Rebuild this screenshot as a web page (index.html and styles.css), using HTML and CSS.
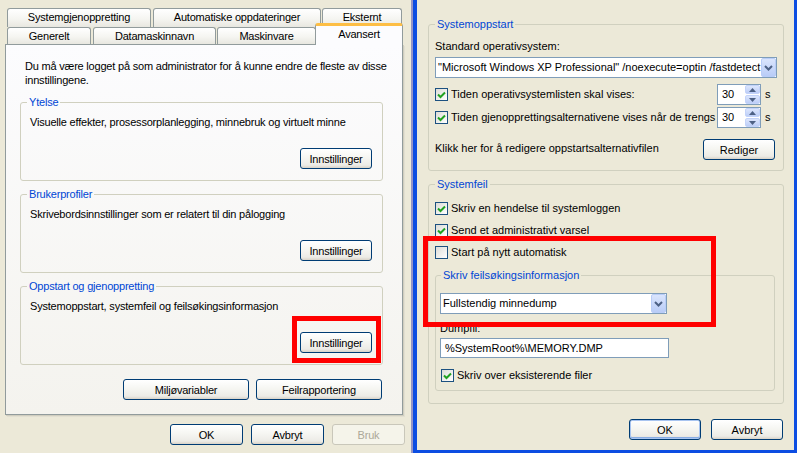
FILE: index.html
```html
<!DOCTYPE html>
<html lang="no">
<head>
  <meta charset="UTF-8" />
  <meta name="viewport" content="width=device-width, initial-scale=1.0" />
  <title>Systemegenskaper - Avansert</title>
  <link rel="stylesheet" href="styles.css">
</head>
<body>
  <div class="screen">
    <div class="dialog left">
      <div class="tabs">
        <div class="tab-row back">
          <div class="tab t-restore">Systemgjenoppretting</div>
          <div class="tab t-update">Automatiske oppdateringer</div>
          <div class="tab t-remote">Eksternt</div>
        </div>
        <div class="tab-row front">
          <div class="tab t-general">Generelt</div>
          <div class="tab t-name">Datamaskinnavn</div>
          <div class="tab t-hardware">Maskinvare</div>
          <div class="tab active">Avansert</div>
        </div>
      </div>

      <div class="page">
        <p class="intro">Du må være logget på som administrator for å kunne endre de fleste av disse<br>innstillingene.</p>

        <fieldset class="group perf">
          <legend>Ytelse</legend>
          <div class="group-text">Visuelle effekter, prosessorplanlegging, minnebruk og virtuelt minne</div>
          <button class="btn settings">Innstillinger</button>
        </fieldset>

        <fieldset class="group perf">
          <legend>Brukerprofiler</legend>
          <div class="group-text">Skrivebordsinnstillinger som er relatert til din pålogging</div>
          <button class="btn settings">Innstillinger</button>
        </fieldset>

        <fieldset class="group perf">
          <legend>Oppstart og gjenoppretting</legend>
          <div class="group-text">Systemoppstart, systemfeil og feilsøkingsinformasjon</div>
          <button class="btn settings">Innstillinger</button>
        </fieldset>

        <div class="page-buttons">
          <button class="btn wide">Miljøvariabler</button>
          <button class="btn wide">Feilrapportering</button>
        </div>
      </div>

      <div class="dialog-buttons">
        <button class="btn">OK</button>
        <button class="btn">Avbryt</button>
        <button class="btn" disabled>Bruk</button>
      </div>
    </div>

    <div class="frame-inactive"></div>

    <div class="dialog right">
      <fieldset class="group boot">
        <legend>Systemoppstart</legend>
        <div class="field-label">Standard operativsystem:</div>
        <div class="combo os">
          <span class="combo-text">"Microsoft Windows XP Professional" /noexecute=optin /fastdetect</span>
          <span class="drop"><svg width="9" height="6" viewBox="0 0 9 6"><path d="M1 1 L4.5 4.5 L8 1" /></svg></span>
        </div>
        <div class="check-row timer">
          <span class="box"><svg width="11" height="11" viewBox="0 0 11 11"><path d="M2 5.5 L4.5 8 L9 3.5" /></svg></span>
          <span class="check-label">Tiden operativsystemlisten skal vises:</span>
          <div class="spin">
            <span class="spin-val">30</span>
            <span class="spin-btns">
              <span><svg width="7" height="4" viewBox="0 0 7 4"><path d="M0 4 L3.5 0 L7 4 Z" /></svg></span>
              <span><svg width="7" height="4" viewBox="0 0 7 4"><path d="M0 0 L3.5 4 L7 0 Z" /></svg></span>
            </span>
          </div>
          <span class="unit">s</span>
        </div>
        <div class="check-row timer second">
          <span class="box"><svg width="11" height="11" viewBox="0 0 11 11"><path d="M2 5.5 L4.5 8 L9 3.5" /></svg></span>
          <span class="check-label">Tiden gjenopprettingsalternativene vises når de trengs</span>
          <div class="spin">
            <span class="spin-val">30</span>
            <span class="spin-btns">
              <span><svg width="7" height="4" viewBox="0 0 7 4"><path d="M0 4 L3.5 0 L7 4 Z" /></svg></span>
              <span><svg width="7" height="4" viewBox="0 0 7 4"><path d="M0 0 L3.5 4 L7 0 Z" /></svg></span>
            </span>
          </div>
          <span class="unit">s</span>
        </div>
        <div class="edit-row">
          <span class="edit-text">Klikk her for å redigere oppstartsalternativfilen</span>
          <button class="btn">Rediger</button>
        </div>
      </fieldset>

      <fieldset class="group fail">
        <legend>Systemfeil</legend>
        <div class="check-row first">
          <span class="box"><svg width="11" height="11" viewBox="0 0 11 11"><path d="M2 5.5 L4.5 8 L9 3.5" /></svg></span>
          <span class="check-label">Skriv en hendelse til systemloggen</span>
        </div>
        <div class="check-row">
          <span class="box"><svg width="11" height="11" viewBox="0 0 11 11"><path d="M2 5.5 L4.5 8 L9 3.5" /></svg></span>
          <span class="check-label">Send et administrativt varsel</span>
        </div>
        <div class="check-row">
          <span class="box"></span>
          <span class="check-label">Start på nytt automatisk</span>
        </div>

        <fieldset class="group dump">
          <legend>Skriv feilsøkingsinformasjon</legend>
          <div class="combo dump-type">
            <span class="combo-text">Fullstendig minnedump</span>
            <span class="drop"><svg width="9" height="6" viewBox="0 0 9 6"><path d="M1 1 L4.5 4.5 L8 1" /></svg></span>
          </div>
          <div class="field-label dump-label">Dumpfil:</div>
          <div class="textbox">%SystemRoot%\MEMORY.DMP</div>
          <div class="check-row overwrite">
            <span class="box"><svg width="11" height="11" viewBox="0 0 11 11"><path d="M2 5.5 L4.5 8 L9 3.5" /></svg></span>
            <span class="check-label">Skriv over eksisterende filer</span>
          </div>
        </fieldset>
      </fieldset>

      <div class="dialog-buttons right-buttons">
        <button class="btn default">OK</button>
        <button class="btn">Avbryt</button>
      </div>
    </div>

    <div class="mark mark-left"></div>
    <div class="mark mark-right"></div>
  </div>
</body>
</html>
```

FILE: styles.css
```css
* {
  box-sizing: border-box;
}
body {
  margin: 0;
  font: 11px "Liberation Sans", Arial, sans-serif;
  letter-spacing: -0.2px;
  color: #000;
  background: #ECE9D8;
}
.screen {
  position: relative;
  display: flex;
  width: 797px;
  height: 453px;
  overflow: hidden;
}
.dialog {
  height: 453px;
  background: #ECE9D8;
}
.dialog.left {
  width: 411px;
  padding: 8px 6px 0 5px;
}
.frame-inactive {
  width: 2px;
  background: #9494C6;
}
.dialog.right {
  width: 384px;
  border: 0 solid #0C4DE2;
  border-width: 0 3px 3px 4px;
  padding: 18px 10px 0 11px;
  letter-spacing: 0;
}

/* tabs */
.tabs {
  margin-left: 2px;
}
.tab-row {
  display: flex;
  align-items: flex-end;
}
.tab {
  border: 1px solid #919B9C;
  border-bottom: 0;
  border-radius: 3px 3px 0 0;
  background: linear-gradient(#FFFFFF, #F5F5F1 55%, #E8E7E0);
  text-align: center;
  line-height: 13px;
  padding-top: 2px;
  white-space: nowrap;
}
.back .tab { height: 19px; }
.front .tab { height: 17px; }
.t-restore { width: 144px; }
.t-update { width: 168px; margin-left: 2px; }
.t-remote { width: 80px; margin-left: 1px; }
.t-general { width: 84px; }
.t-name { width: 123px; margin-left: 2px; }
.t-hardware { width: 99px; margin-left: 1px; }
.front .tab.active {
  position: relative;
  z-index: 1;
  width: 88px;
  height: 22px;
  margin: -4px 0 -1px -1px;
  background: #FCFCFE;
  border-top: 3px solid #FDBE45;
  padding-top: 2px;
}

/* tab page */
.page {
  width: 398px;
  height: 371px;
  border: 1px solid #919B9C;
  background: linear-gradient(#FCFCFE, #F4F3EE);
  box-shadow: 1px 1px 0 #D0CEBF, 2px 2px 0 #E2DFD1;
  padding: 14px 19px 0 14px;
}
.intro {
  margin: 0;
  padding-left: 5px;
  line-height: 14px;
  white-space: nowrap;
}

/* group boxes */
.group {
  margin: 0;
  padding: 0;
  min-width: 0;
  border: 1px solid #D0D0BF;
  border-radius: 3px;
}
.group legend {
  color: #0046D5;
  padding: 0 2px;
  margin-left: 0;
  line-height: 13px;
}
.perf {
  margin-top: 7px;
  padding: 0 10px 11px 9px;
}
.intro + .perf {
  margin-top: 9px;
}
.perf legend {
  margin-left: -3px;
}
.group-text {
  margin-top: 7px;
  line-height: 13px;
  white-space: nowrap;
}

/* buttons */
.btn {
  height: 21px;
  padding: 0;
  font: inherit;
  letter-spacing: inherit;
  color: #000;
  border: 1px solid #003C74;
  border-radius: 3px;
  background: linear-gradient(#FFFFFF, #F6F6F2 45%, #ECEBE6 85%, #D9D3C8);
  white-space: nowrap;
}
.btn:disabled {
  color: #ACA899;
  border-color: #C9C7BA;
  background: #F5F4EA;
}
.btn.default {
  box-shadow: inset 0 0 0 1px #A8C4F0, inset 0 -1px 0 1px #89ADE4;
}
.btn.settings {
  display: block;
  width: 72px;
  margin: 19px 0 0 auto;
}
.page-buttons {
  display: flex;
  justify-content: flex-end;
  gap: 7px;
  margin: 14px 1px 0 0;
}
.btn.wide {
  width: 126px;
}
.dialog-buttons {
  display: flex;
  justify-content: flex-end;
  gap: 8px;
  margin-top: 9px;
}
.dialog-buttons .btn {
  width: 73px;
}
.right-buttons {
  gap: 10px;
  margin: 15px 1px 0 0;
}
.right-buttons .btn {
  width: 72px;
}

/* right dialog */
.boot {
  padding: 0 6px 10px;
}
.field-label {
  margin-top: 9px;
  line-height: 13px;
}
.combo {
  display: flex;
  height: 21px;
  border: 1px solid #7F9DB9;
  background: #FFFFFF;
}
.combo.os {
  width: 342px;
  margin-top: 4px;
}
.combo-text {
  flex: 1;
  overflow: hidden;
  white-space: nowrap;
  padding-left: 2px;
  line-height: 19px;
}
.drop {
  width: 15px;
  flex: none;
  display: flex;
  align-items: center;
  justify-content: center;
  border: 1px solid #B9CDF8;
  border-radius: 2px;
  background: linear-gradient(#DAE5FD, #B9CCF7);
}
.drop path {
  fill: none;
  stroke: #4D6185;
  stroke-width: 2;
}
.check-row {
  display: flex;
  align-items: center;
  white-space: nowrap;
}
.box {
  width: 13px;
  height: 13px;
  flex: none;
  margin-right: 3px;
  border: 1px solid #1C5180;
  background: linear-gradient(135deg, #DCDCD7, #FFFFFF);
}
.box svg {
  display: block;
}
.box path {
  fill: none;
  stroke: #21A121;
  stroke-width: 2;
}
.check-label {
  line-height: 13px;
}
.timer {
  margin-top: 6px;
}
.timer.second {
  margin-top: 2px;
}
.timer .check-label {
  flex: 1;
  overflow: hidden;
}
.spin {
  display: flex;
  width: 44px;
  height: 21px;
  flex: none;
  border: 1px solid #7F9DB9;
  background: #FFFFFF;
}
.spin-val {
  flex: 1;
  padding-left: 4px;
  line-height: 19px;
}
.spin-btns {
  width: 15px;
  display: flex;
  flex-direction: column;
  gap: 1px;
}
.spin-btns span {
  flex: 1;
  display: flex;
  align-items: center;
  justify-content: center;
  border: 1px solid #C3D3FA;
  border-radius: 2px;
  background: linear-gradient(#DCE6FD, #BDCEF7);
}
.spin-btns path {
  fill: #4D6185;
}
.unit {
  width: 16px;
  padding-left: 4px;
  line-height: 13px;
}
.edit-row {
  display: flex;
  align-items: center;
  margin-top: 11px;
}
.edit-text {
  flex: 1;
  padding-bottom: 3px;
  line-height: 13px;
}
.edit-row .btn {
  width: 72px;
  margin-right: 2px;
}

.fail {
  margin-top: 7px;
  padding: 0 8px 12px 6px;
}
.fail > .check-row {
  margin-top: 9px;
}
.fail > .check-row.first {
  margin-top: 11px;
}
.dump {
  margin-top: 10px;
  padding: 0 6px 8px 4px;
}
.dump legend {
  margin-left: 1px;
}
.combo.dump-type {
  width: 227px;
  margin-top: 11px;
}
.dump-label {
  margin-top: 8px;
}
.textbox {
  width: 229px;
  height: 20px;
  margin-top: 3px;
  padding-left: 4px;
  line-height: 18px;
  border: 1px solid #7F9DB9;
  background: #FFFFFF;
}
.check-row.overwrite {
  margin: 11px 0 0 1px;
}

/* red highlight frames drawn over the screenshot */
.mark {
  position: absolute;
  border: 5px solid #FF0000;
}
.mark-left {
  left: 292px;
  top: 316px;
  width: 89px;
  height: 47px;
}
.mark-right {
  left: 423px;
  top: 236px;
  width: 293px;
  height: 91px;
}
```
